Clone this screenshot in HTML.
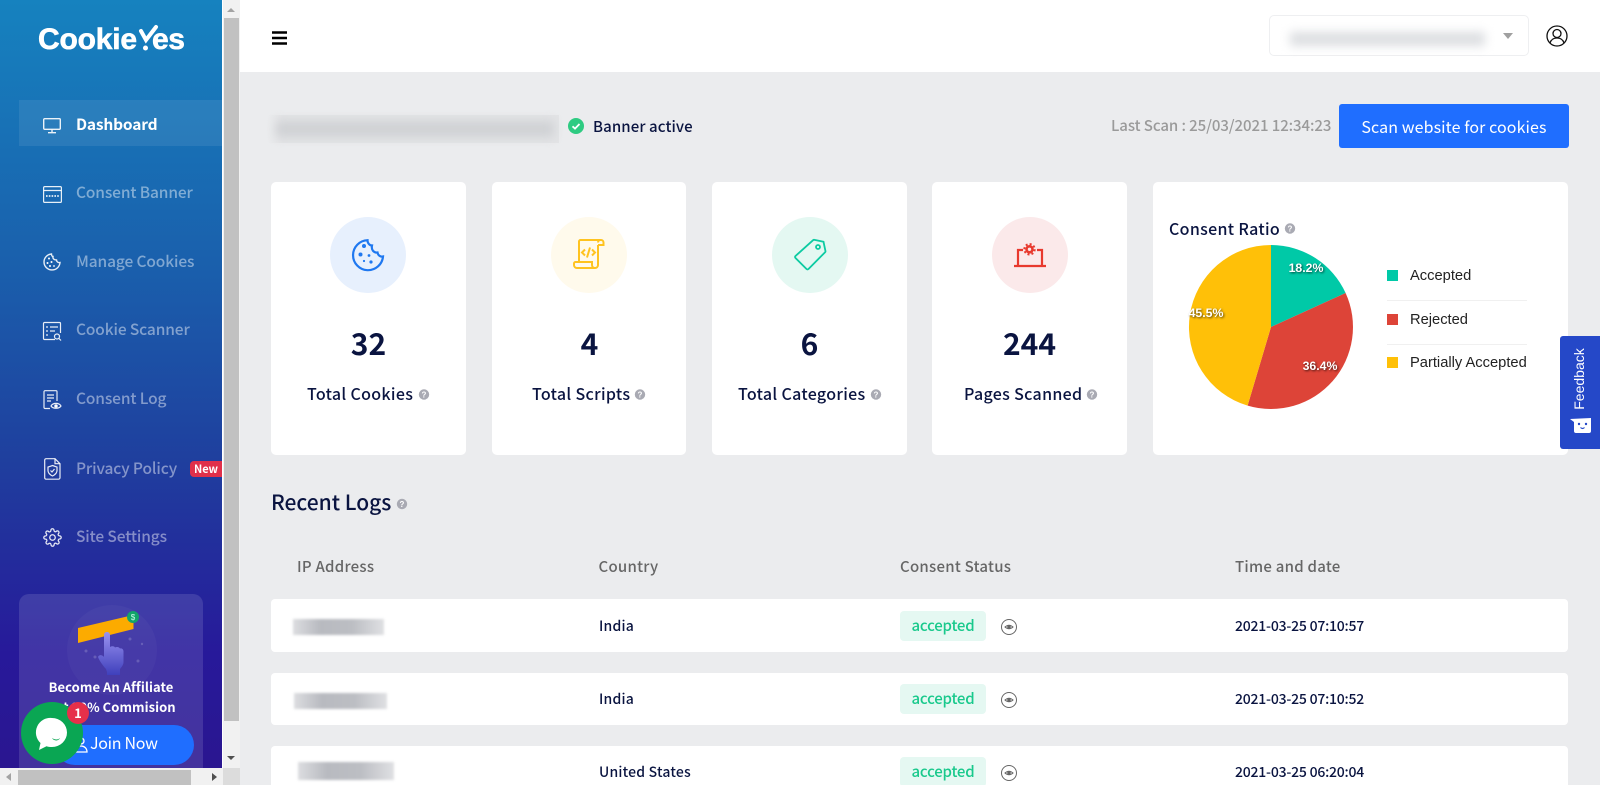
<!DOCTYPE html>
<html><head><meta charset="utf-8"><title>CookieYes Dashboard</title>
<style>
*{box-sizing:border-box}
html,body{margin:0;padding:0;width:1600px;height:785px;overflow:hidden;background:#ebecee}
body{position:relative;font-family:"Noto Sans CJK SC","Liberation Sans",sans-serif;color:#0a1440}
.t{position:absolute;white-space:nowrap;line-height:20px;height:20px}
.a{position:absolute}
.card{position:absolute;background:#fff;border-radius:5px;top:182px;height:273px}
.circ{position:absolute;width:76px;height:76px;border-radius:50%;top:217px}
.num{position:absolute;top:322px;height:40px;line-height:40px;font-size:30px;font-weight:700;text-align:center;width:195px;color:#0a1440}
.lab{font-size:16px;font-weight:500;top:383px;letter-spacing:.32px}
.nav{font-size:15.5px;font-weight:500;left:76px;color:rgba(255,255,255,.45);letter-spacing:-.12px}
.row{position:absolute;left:271px;width:1297px;height:53px;background:#fff;border-radius:4px}
.th{font-size:15px;font-weight:500;color:#666;top:557px;letter-spacing:.25px}
.td{font-size:14px;font-weight:500;color:#0a1440;letter-spacing:.2px}
.dt{letter-spacing:-.22px}
.pill{position:absolute;left:900px;width:86px;height:30px;background:#e5f8f2;border-radius:4px;color:#19c98c;font-size:15px;font-weight:500;text-align:center;line-height:30px;letter-spacing:-.2px}
.blur{position:absolute;filter:blur(1.2px);background:linear-gradient(90deg,#dcdde0,#b8bac0 30%,#bcbec3 65%,#dfe0e3)}
.leg{font-family:"Liberation Sans",sans-serif;font-size:14.7px;color:#222;left:1410px}
svg{position:absolute;overflow:visible}
</style></head><body>

<!-- sidebar -->
<div class="a" style="left:0;top:0;width:222px;height:768px;background:linear-gradient(180deg,#1682bf 0%,#1a5fac 35%,#1f3f9e 60%,#27199a 85%,#2a1690 100%)"></div>
<div class="a" style="left:19px;top:100px;width:203px;height:46px;background:rgba(255,255,255,.08)"></div>

<!-- logo -->
<div class="t" style="left:38px;top:24px;height:32px;line-height:32px;font-family:'Liberation Sans',sans-serif;font-weight:700;font-size:30px;color:#fff;letter-spacing:-.2px;-webkit-text-stroke:.6px #fff">Cookie</div>
<svg style="left:0;top:0" width="222" height="60"><path d="M141 31l5 9 10-13" fill="none" stroke="#fff" stroke-width="4" stroke-linecap="round"/><circle cx="145.500" cy="48" r="2.500" fill="#fff"/></svg>
<div class="t" style="left:152px;top:24px;height:32px;line-height:32px;font-family:'Liberation Sans',sans-serif;font-weight:700;font-size:30px;color:#fff;letter-spacing:-.4px;-webkit-text-stroke:.6px #fff">es</div>

<!-- nav icons -->
<svg style="left:43px;top:118px" width="18" height="16" viewBox="0 0 18 16" fill="none" stroke="#fff" stroke-opacity=".9" stroke-width="1.4"><rect x=".7" y=".7" width="16.6" height="10.6" rx="1"/><path d="M9 11.500v3M5 14.700h8"/></svg>
<svg style="left:43px;top:186px" width="19" height="17" viewBox="0 0 19 17" fill="none" stroke="#fff" stroke-opacity=".9" stroke-width="1.2"><rect x=".6" y=".6" width="17.8" height="15.8" rx="1.2"/><path d="M.6 4.500h17.8"/><path d="M3 10h13" stroke-dasharray="1.6 1.2" stroke-width="1.8"/></svg>
<svg style="left:43px;top:253px" width="18" height="18" viewBox="0 0 18 18" fill="none" stroke="#fff" stroke-opacity=".9" stroke-width="1.4"><path d="M8.500 1A8 8 0 1 0 17 9.500C15 10 13.500 8.500 13.500 7C11 7 9.500 5.500 10 3.500C9 3.500 8.500 2 8.500 1Z"/><g fill="#fff" stroke="none"><circle cx="6" cy="5.500" r="1"/><circle cx="4.500" cy="10" r="1"/><circle cx="8.500" cy="9" r="1"/><circle cx="7" cy="13" r="1"/><circle cx="11" cy="13" r=".9"/></g></svg>
<svg style="left:43px;top:322px" width="19" height="19" viewBox="0 0 19 19" fill="none" stroke="#fff" stroke-opacity=".9" stroke-width="1.2"><path d="M12 17.500H1.500a1 1 0 0 1-1-1V1.500a1 1 0 0 1 1-1h15a1 1 0 0 1 1 1V11"/><path d="M3 5h2M7 5h8M3 9h2M7 9h5M3 13h2"/><circle cx="14" cy="14.500" r="2.500"/><path d="M16 16.500l2 2"/></svg>
<svg style="left:43px;top:390px" width="19" height="20" viewBox="0 0 19 20" fill="none" stroke="#fff" stroke-opacity=".9" stroke-width="1.2"><path d="M7 18.500H2a1 1 0 0 1-1-1V1.700a1 1 0 0 1 1-1h11a1 1 0 0 1 1 1V11"/><path d="M4 5h7M4 8h7M4 11h4"/><path d="M8 16c2-3.500 8-3.500 10 0c-2 3-8 3-10 0z"/><circle cx="13" cy="16" r="1.200" fill="#fff"/></svg>
<svg style="left:44px;top:458px" width="17" height="22" viewBox="0 0 17 22" fill="none" stroke="#fff" stroke-opacity=".9" stroke-width="1.2"><path d="M2 .7h9l5 5v14a1.500 1.500 0 0 1-1.500 1.500H2A1.500 1.500 0 0 1 .7 20V2A1.500 1.500 0 0 1 2 .7z"/><path d="M11 .7v5h5"/><path d="M8.500 7.500l4.500 1.500v3.500c0 3-2.500 4.500-4.500 5.500c-2-1-4.500-2.500-4.500-5.500V9z"/><path d="M6.500 12.500l1.500 1.500 2.500-3"/></svg>
<svg style="left:43px;top:528px" width="19" height="19" viewBox="0 0 24 24" fill="none" stroke="#fff" stroke-opacity=".9" stroke-width="1.600"><circle cx="12" cy="12" r="3.500"/><path d="M19.400 15a1.650 1.650 0 0 0 .33 1.820l.06.06a2 2 0 1 1-2.830 2.830l-.06-.06a1.650 1.650 0 0 0-2.820 1.170V21a2 2 0 0 1-4 0v-.09a1.650 1.650 0 0 0-2.820-1.170l-.06.06a2 2 0 1 1-2.830-2.830l.06-.06a1.650 1.650 0 0 0-1.170-2.820H3a2 2 0 0 1 0-4h.09a1.650 1.650 0 0 0 1.170-2.820l-.06-.06a2 2 0 1 1 2.830-2.830l.06.06A1.650 1.650 0 0 0 9.910 3.260V3a2 2 0 0 1 4 0v.09a1.650 1.650 0 0 0 2.820 1.170l.06-.06a2 2 0 1 1 2.830 2.830l-.06.06a1.650 1.650 0 0 0 1.170 2.820H21a2 2 0 0 1 0 4h-.09A1.650 1.650 0 0 0 19.400 15z"/></svg>

<div class="t nav" style="top:114px;color:#fff;font-weight:700;letter-spacing:-.18px">Dashboard</div>
<div class="t nav" style="top:182px">Consent Banner</div>
<div class="t nav" style="top:251px">Manage Cookies</div>
<div class="t nav" style="top:319px">Cookie Scanner</div>
<div class="t nav" style="top:388px">Consent Log</div>
<div class="t nav" style="top:458px">Privacy Policy</div>
<div class="t nav" style="top:526px">Site Settings</div>
<div class="a" style="left:190px;top:461px;width:32px;height:16px;background:#e0304a;border-radius:4px 0 0 4px;color:#fff;font-size:11px;font-weight:700;line-height:16px;text-align:center">New</div>

<!-- affiliate -->
<div class="a" style="left:19px;top:594px;width:184px;height:174px;background:rgba(255,255,255,.12);border-radius:10px 10px 0 0"></div>
<svg style="left:0;top:590px" width="222" height="100"><defs><linearGradient id="h" x1="0" y1="0" x2="0" y2="1"><stop offset="0" stop-color="#9a92f0"/><stop offset="1" stop-color="#3f40bc"/></linearGradient></defs>
<circle cx="112" cy="60" r="45" fill="#fff" fill-opacity=".03"/>
<path d="M78 38L133.500 25V39L78 53Z" fill="#fcab00"/>
<circle cx="133" cy="27" r="6" fill="#11a569"/><text x="133" y="30" font-size="8" fill="#cfe" text-anchor="middle" font-family="Liberation Sans">$</text>
<path d="M104 45c0-4 6-4 6 0v12c2-1 4-1 5 .5c2-1 4-.5 5 1c2-.5 3.500 1 3.500 3V72c0 3-2 5-3.500 7v6h-13v-3l-1-3c-3-3-7-9-8-12c1-2.500 4-2.500 6 0z" fill="url(#h)"/>
<g fill="#fff" fill-opacity=".18"><circle cx="86" cy="61" r="1.500"/><circle cx="95" cy="67" r="1.500"/><circle cx="130" cy="49" r="1.500"/><circle cx="142" cy="54" r="1.200"/><circle cx="138" cy="71" r="1.500"/></g></svg>
<div class="t" style="left:19px;width:184px;text-align:center;top:677px;font-size:13px;font-weight:700;color:#fff;letter-spacing:.05px">Become An Affiliate</div>
<div class="t" style="left:19px;width:184px;text-align:center;top:697px;font-size:13px;font-weight:700;color:#fff;letter-spacing:.05px">Get 20% Commision</div>
<div class="a" style="left:55px;top:725px;width:139px;height:40px;background:#1f6eff;border-radius:20px"></div>
<svg style="left:72px;top:736px" width="16" height="18" fill="none" stroke="#fff" stroke-width="1.300"><circle cx="9" cy="5" r="3"/><path d="M3 16c0-4 3-6 6-6s6 2 6 6z"/></svg>
<div class="t" style="left:90px;top:731px;height:22px;line-height:22px;font-size:16px;color:#fff;letter-spacing:-.3px">Join Now</div>

<!-- chat -->
<div class="a" style="left:21px;top:702px;width:62px;height:62px;border-radius:50%;background:#0aa653"></div>
<svg style="left:21px;top:702px" width="62" height="62"><path d="M31 16a15 14.500 0 0 1 0 29c-2 0-4-.3-5.500-.800L18 48l1.500-7A14.500 14.500 0 0 1 31 16z" fill="#fff"/><path d="M31 36c3 2 6 2 8 0c-1 3-6 3.500-8 0z" fill="#0aa653"/></svg>
<div class="a" style="left:67px;top:702px;width:22px;height:22px;border-radius:50%;background:#e6304a;color:#fff;font-weight:700;font-size:13px;line-height:22px;text-align:center">1</div>

<!-- scrollbars -->
<div class="a" style="left:222px;top:0;width:18px;height:768px;background:#f1f1f1;border-left:1px solid #fff"></div>
<div class="a" style="left:224px;top:18px;width:15px;height:703px;background:#c1c1c1"></div>
<svg style="left:226px;top:7px" width="10" height="6"><path d="M1 5L5 1L9 5Z" fill="#a3a3a3"/></svg>
<svg style="left:226px;top:755px" width="10" height="6"><path d="M1 1L5 5L9 1Z" fill="#505050"/></svg>
<div class="a" style="left:0;top:768px;width:223px;height:17px;background:#f1f1f1"></div>
<div class="a" style="left:18px;top:770px;width:173px;height:15px;background:#c1c1c1"></div>
<svg style="left:5px;top:772px" width="8" height="10"><path d="M6 1L1 5L6 9Z" fill="#a3a3a3"/></svg>
<svg style="left:211px;top:772px" width="8" height="10"><path d="M1 1L6 5L1 9Z" fill="#505050"/></svg>
<div class="a" style="left:223px;top:768px;width:17px;height:17px;background:#dcdcdc"></div>

<!-- header -->
<div class="a" style="left:240px;top:0;width:1360px;height:72px;background:#fff"></div>
<svg style="left:272px;top:31px" width="15" height="14"><path d="M0 1.500h15M0 7h15M0 12.500h15" stroke="#000" stroke-width="2.500"/></svg>
<div class="a" style="left:1269px;top:15px;width:260px;height:41px;border:1px solid #eeeff1;border-radius:5px;background:#fff"></div>
<div class="a" style="left:1290px;top:32px;width:195px;height:14px;background:#dcdee1;filter:blur(5px)"></div>
<svg style="left:1503px;top:33px" width="10" height="6"><path d="M0 0H10L5 6Z" fill="#a0a0a0"/></svg>
<svg style="left:1546px;top:25px" width="22" height="22" viewBox="0 0 22 22" fill="none" stroke="#111" stroke-width="1.300"><circle cx="11" cy="11" r="10"/><circle cx="11" cy="8.500" r="4"/><path d="M4 18c1-3.500 3.500-5 7-5s6 1.500 7 5"/></svg>

<!-- title bar -->
<div class="a" style="left:268px;top:115px;width:291px;height:28px;background:linear-gradient(90deg,#ebecee,#e3e4e6 5%,#e3e4e6)"></div>
<div class="a" style="left:276px;top:121px;width:278px;height:16px;background:#cfd1d4;filter:blur(5px)"></div>
<svg style="left:568px;top:118px" width="16" height="16"><circle cx="8" cy="8" r="8" fill="#2ecb82"/><path d="M4.500 8.300l2.500 2.300 4.500-4.600" fill="none" stroke="#fff" stroke-width="1.800"/></svg>
<div class="t" style="left:593px;top:117px;font-size:15px;font-weight:500;letter-spacing:.1px">Banner active</div>
<div class="t" style="left:1111px;top:116px;font-size:15px;font-weight:500;color:#9a9a9a;letter-spacing:-.08px">Last Scan : 25/03/2021 12:34:23</div>
<div class="a" style="left:1339px;top:104px;width:230px;height:44px;background:#1f6eff;border-radius:3px;color:#fff;font-size:16px;line-height:44px;text-align:center;letter-spacing:.1px">Scan website for cookies</div>

<!-- cards -->
<div class="card" style="left:271px;width:195px"></div>
<div class="card" style="left:492px;width:194px"></div>
<div class="card" style="left:712px;width:195px"></div>
<div class="card" style="left:932px;width:195px"></div>
<div class="card" style="left:1153px;width:415px"></div>

<div class="circ" style="left:330px;background:#e7f0fd"></div>
<div class="circ" style="left:551px;background:#fffaec"></div>
<div class="circ" style="left:772px;background:#e4f8f2"></div>
<div class="circ" style="left:992px;background:#fbe9ea"></div>

<svg style="left:352px;top:239px" width="32" height="32" viewBox="0 0 32 32" fill="none" stroke="#1f78f0" stroke-width="2.200"><path d="M15.500 1.200A15 15 0 1 0 31 17.500C28.500 18 26 16.500 25.500 13.500C22 14 19 11 20 6.500C17.500 6.500 15.500 4 15.500 1.200Z"/><g fill="#1f78f0" stroke="none"><circle cx="12" cy="7" r="2"/><circle cx="8.500" cy="15.500" r="2"/><circle cx="17" cy="16.500" r="1.400"/><circle cx="12" cy="22" r="1.100"/><circle cx="19" cy="23" r="1.600"/></g></svg>
<svg style="left:573px;top:239px" width="32" height="30" viewBox="0 0 32 30" fill="none" stroke="#ffc31f" stroke-width="2"><path d="M6 23V2.500A1.500 1.500 0 0 1 7.500 1H28a2.500 2.500 0 0 1 2.500 2.500V6H25"/><path d="M25 6V26a3 3 0 0 1-3 3H4a3 3 0 0 1-3-3v-1.500a1.500 1.500 0 0 1 1.500-1.500H19v3a3 3 0 0 0 3 3"/><path d="M25 3.500a2.500 2.500 0 0 1 2.500-2.500"/><path d="M12 10.500l-3 3 3 3M19 10.500l3 3-3 3M17 8.500l-3 10"/></svg>
<svg style="left:794px;top:239px" width="32" height="32" viewBox="0 0 32 32" fill="none" stroke="#0ccba2" stroke-width="1.800"><path d="M20 .8l9.500 2 2 9.500a1 1 0 0 1-.3.800L14.500 30a1.500 1.500 0 0 1-2 0L1.500 19a1.500 1.500 0 0 1 0-2L19.200 1.100a1 1 0 0 1 .8-.3z"/><circle cx="24" cy="8" r="2"/></svg>
<svg style="left:1014px;top:242px" width="32" height="26" viewBox="0 0 32 26" fill="none" stroke="#e8392e" stroke-width="2.200"><path d="M0 24h32"/><path d="M4 24V8h5M23 8h5v16"/><circle cx="15.500" cy="7.300" r="3" stroke-width="2.600"/><circle cx="15.500" cy="7.300" r="5.200" stroke-width="2" stroke-dasharray="2 2.080"/></svg>

<div class="num" style="left:271px">32</div>
<div class="num" style="left:492px">4</div>
<div class="num" style="left:712px">6</div>
<div class="num" style="left:932px">244</div>

<div class="t lab" style="left:307px">Total Cookies</div>
<div class="t lab" style="left:532px">Total Scripts</div>
<div class="t lab" style="left:738px">Total Categories</div>
<div class="t lab" style="left:964px">Pages Scanned</div>
<div class="t lab" style="left:1169px;top:218px">Consent Ratio</div>

<!-- help dots -->
<svg style="left:0;top:0" width="1600" height="785" font-family="Liberation Sans" font-weight="700" font-size="8" fill="#fff" text-anchor="middle">
<g><circle cx="424" cy="394.500" r="5.200" fill="#a9aab3"/><text x="424" y="397.500">?</text></g>
<g><circle cx="640" cy="394.500" r="5.200" fill="#a9aab3"/><text x="640" y="397.500">?</text></g>
<g><circle cx="876" cy="394.500" r="5.200" fill="#a9aab3"/><text x="876" y="397.500">?</text></g>
<g><circle cx="1092" cy="394.500" r="5.200" fill="#a9aab3"/><text x="1092" y="397.500">?</text></g>
<g><circle cx="1290" cy="228.500" r="5.200" fill="#a9aab3"/><text x="1290" y="231.500">?</text></g>
<g><circle cx="402" cy="504" r="5.200" fill="#a9aab3"/><text x="402" y="507">?</text></g>
</svg>

<!-- pie -->
<svg style="left:0;top:0" width="1600" height="785">
<path d="M1271 327V245A82 82 0 0 1 1345.600 293Z" fill="#00c9a7"/>
<path d="M1271 327L1345.600 293A82 82 0 0 1 1247.600 405.600Z" fill="#dd4438"/>
<path d="M1271 327L1247.600 405.600A82 82 0 0 1 1271 245Z" fill="#ffc008"/>
<g font-family="Liberation Sans" font-weight="700" font-size="12.300" fill="#fff" text-anchor="middle" style="text-shadow:1px 1px 2px rgba(0,0,0,.7)">
<text x="1306" y="272">18.2%</text><text x="1206" y="317">45.5%</text><text x="1320" y="370">36.4%</text></g>
</svg>
<div class="a" style="left:1387px;top:270px;width:11px;height:11px;background:#00c9a7"></div>
<div class="a" style="left:1387px;top:314px;width:11px;height:11px;background:#dd4438"></div>
<div class="a" style="left:1387px;top:357px;width:11px;height:11px;background:#ffc008"></div>
<div class="a" style="left:1387px;top:300px;width:140px;height:1px;background:#f0f0f0"></div>
<div class="a" style="left:1387px;top:344px;width:140px;height:1px;background:#f0f0f0"></div>
<div class="t leg" style="top:266px">Accepted</div>
<div class="t leg" style="top:310px">Rejected</div>
<div class="t leg" style="top:353px">Partially Accepted</div>

<!-- feedback -->
<div class="a" style="left:1560px;top:336px;width:40px;height:113px;background:#2548c8;border-radius:3px 0 0 3px"></div>
<div class="t" style="left:1539px;top:369px;width:80px;text-align:center;font-family:'Liberation Sans',sans-serif;font-size:14px;color:#fff;transform:rotate(-90deg)">Feedback</div>
<svg style="left:1570px;top:418px" width="22" height="16"><path d="M0 1L21 0V13a2 2 0 0 1-2 2H6a2 2 0 0 1-2-2V4z" fill="#fff"/><circle cx="9" cy="6" r="1.200" fill="#2548c8"/><circle cx="16" cy="6" r="1.200" fill="#2548c8"/><path d="M10.500 9.500q2 2 4 0" stroke="#2548c8" stroke-width="1.200" fill="none"/></svg>

<!-- logs -->
<div class="t" style="left:271px;top:490px;height:24px;line-height:24px;font-size:21px;font-weight:500">Recent Logs</div>
<div class="t th" style="left:297px">IP Address</div>
<div class="t th" style="left:598.500px">Country</div>
<div class="t th" style="left:900px">Consent Status</div>
<div class="t th" style="left:1235px">Time and date</div>

<div class="row" style="top:599px"></div>
<div class="row" style="top:673px;height:52px"></div>
<div class="row" style="top:746px;height:39px;border-radius:4px 4px 0 0"></div>

<div class="blur" style="left:293px;top:619px;width:91px;height:16px"></div>
<div class="blur" style="left:294px;top:693px;width:93px;height:16px"></div>
<div class="blur" style="left:298px;top:762px;width:96px;height:18px"></div>

<div class="t td" style="left:599px;top:616px">India</div>
<div class="t td" style="left:599px;top:689px">India</div>
<div class="t td" style="left:599px;top:762px">United States</div>
<div class="t td dt" style="left:1235px;top:616px">2021-03-25 07:10:57</div>
<div class="t td dt" style="left:1235px;top:689px">2021-03-25 07:10:52</div>
<div class="t td dt" style="left:1235px;top:762px">2021-03-25 06:20:04</div>

<div class="pill" style="top:611px">accepted</div>
<div class="pill" style="top:684px">accepted</div>
<div class="pill" style="top:757px">accepted</div>
<svg style="left:0;top:0" width="1600" height="785" fill="none" stroke="#666" stroke-width="1">
<g><circle cx="1009" cy="627" r="7.500"/><path d="M1005 627q4-3.500 8 0q-4 3.500-8 0z"/><circle cx="1009" cy="627" r="1.300" fill="#666"/></g>
<g><circle cx="1009" cy="700" r="7.500"/><path d="M1005 700q4-3.500 8 0q-4 3.500-8 0z"/><circle cx="1009" cy="700" r="1.300" fill="#666"/></g>
<g><circle cx="1009" cy="773" r="7.500"/><path d="M1005 773q4-3.500 8 0q-4 3.500-8 0z"/><circle cx="1009" cy="773" r="1.300" fill="#666"/></g>
</svg>
</body></html>
